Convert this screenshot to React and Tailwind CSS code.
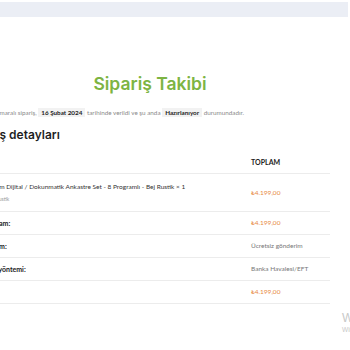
const rows = [
    { label: "Ara toplam:", value: "₺4.199,00", price: true },
    { label: "Gönderim:", value: "Ücretsiz gönderim", price: false },
    { label: "Ödeme yöntemi:", value: "Banka Havalesi/EFT", price: false },
    { label: "Toplam:", value: "₺4.199,00", price: true },
];

const App = () => {
    return (
        <div className="relative w-[350px] h-[350px] overflow-hidden bg-white font-['Lato','Liberation_Sans',sans-serif]">
            <div className="mt-[2px] h-[15px] w-[348px] bg-[#ebeef5]" />

            <div className="ml-[-34px] w-[368px]">
                <h1 className="mt-[55px] text-center text-[17.5px] leading-[24px] font-semibold text-[#7db443] font-['Inter','Noto_Sans',sans-serif]">
                    Sipariş Takibi
                </h1>

                <p className="mt-[11px] ml-[3px] text-[6.3px] leading-[12px] text-[#8a8a8a] whitespace-nowrap">
                    #10482 numaralı sipariş,{" "}
                    <mark className="bg-[#f2f2f2] px-[3px] py-[1px] font-bold text-[#222]">16 Şubat 2024</mark>{" "}
                    tarihinde verildi ve şu anda{" "}
                    <mark className="bg-[#f2f2f2] px-[3px] py-[1px] font-bold text-[#222]">Hazırlanıyor</mark>{" "}
                    durumundadır.
                </p>

                <h2 className="mt-[7px] text-[12px] leading-[18px] font-semibold text-[#1f1f1f] font-['Inter','Noto_Sans',sans-serif]">
                    Sipariş detayları
                </h2>

                <div className="mt-[8px] w-[364px] pl-[8px] text-[6.5px]">
                    <div className="flex h-[22px] items-center border-b border-[#ececec] font-bold text-[7px] text-[#222]">
                        <div className="w-[277px]">ÜRÜN</div>
                        <div>TOPLAM</div>
                    </div>
                    <div className="flex h-[38px] items-center border-b border-[#ececec]">
                        <div className="w-[277px] flex flex-col gap-[4px]">
                            <div className="text-[#333] whitespace-nowrap">Ankastram Dijital / Dokunmatik Ankastre Set - 8 Programlı - Bej Rustik × 1</div>
                            <div className="text-[5px] text-[#999]">Renk: Bej Rustik</div>
                        </div>
                        <div className="text-[#e8893f]">₺4.199,00</div>
                    </div>
                    {rows.map((row) => (
                        <div key={row.label} className="flex h-[23px] items-center border-b border-[#ececec]">
                            <div className="w-[277px] font-bold text-[7px] text-[#222] whitespace-nowrap">{row.label}</div>
                            <div className={row.price ? "text-[#e8893f]" : "text-[#777]"}>{row.value}</div>
                        </div>
                    ))}
                </div>
            </div>

            <div className="absolute left-[342px] top-[311px] whitespace-nowrap text-[#c8c8c8] font-['Liberation_Sans',sans-serif]">
                <div className="text-[12px] leading-[14px]">Windows'u etkinleştir</div>
                <div className="text-[6.5px] leading-[9px]">Windows'u etkinleştirmek için Ayarlar'a gidin.</div>
            </div>
        </div>
    );
};

export default App;
